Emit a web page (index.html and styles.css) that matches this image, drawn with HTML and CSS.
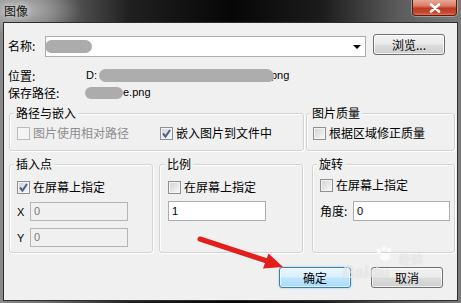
FILE: index.html
```html
<!DOCTYPE html>
<html lang="zh">
<head>
<meta charset="utf-8">
<title>图像</title>
<link rel="stylesheet" href="styles.css">
</head>
<body>
<div class="window">
  <div class="titlebar">
    <span class="title">图像</span>
    <div class="close">
      <svg width="14" height="10" viewBox="0 0 14 10"><path d="M3 1.5 L11 8.5 M11 1.5 L3 8.5" stroke="#fff" stroke-width="2.6" stroke-linecap="round"/></svg>
    </div>
  </div>
  <div class="client">
    <div class="row-name">
      <span class="lbl-name">名称:</span>
      <div class="combo"><span class="blob blob-name"></span><span class="combo-arrow"></span></div>
      <button class="btn btn-browse">浏览...</button>
    </div>
    <div class="info-row first">
      <span class="info-label">位置:</span>
      <span class="info-val">D:<span class="blob smear"></span>png</span>
    </div>
    <div class="info-row">
      <span class="info-label">保存路径:</span>
      <span class="info-val"><span class="blob blob-save"></span>e.png</span>
    </div>

    <div class="groups-1">
      <div class="group g-path">
        <div class="legend">路径与嵌入</div>
        <div class="check-row">
          <label class="check disabled"><span class="cb"></span><span>图片使用相对路径</span></label>
          <label class="check embed"><span class="cb checked"><svg width="11" height="11" viewBox="0 0 11 11"><path d="M2 5.5 L4.5 8.5 L9 2" fill="none" stroke="#4d5f8c" stroke-width="2"/></svg></span><span>嵌入图片到文件中</span></label>
        </div>
      </div>
      <div class="group g-quality">
        <div class="legend">图片质量</div>
        <div class="check-row">
          <label class="check"><span class="cb"></span><span>根据区域修正质量</span></label>
        </div>
      </div>
    </div>

    <div class="groups-2">
      <div class="group g-insert">
        <div class="legend">插入点</div>
        <div class="check-row2">
          <label class="check"><span class="cb checked"><svg width="11" height="11" viewBox="0 0 11 11"><path d="M2 5.5 L4.5 8.5 L9 2" fill="none" stroke="#4d5f8c" stroke-width="2"/></svg></span><span>在屏幕上指定</span></label>
        </div>
        <div class="field-row fx"><span class="axis">X</span><span class="input disabled">0</span></div>
        <div class="field-row fy"><span class="axis">Y</span><span class="input disabled">0</span></div>
      </div>
      <div class="group g-scale">
        <div class="legend">比例</div>
        <div class="check-row2">
          <label class="check"><span class="cb"></span><span>在屏幕上指定</span></label>
        </div>
        <div class="field-row fx"><span class="input wide">1</span></div>
      </div>
      <div class="group g-rotate">
        <div class="legend">旋转</div>
        <div class="check-row2">
          <label class="check"><span class="cb"></span><span>在屏幕上指定</span></label>
        </div>
        <div class="field-row fx"><span class="angle">角度:</span><span class="input">0</span></div>
      </div>
    </div>

    <div class="buttons">
      <button class="btn btn-ok">确定</button>
      <button class="btn btn-cancel">取消</button>
    </div>
  </div>

  <div class="watermark">
    <svg class="paw" width="22" height="16" viewBox="0 0 22 16">
      <circle cx="5" cy="5" r="2.5" fill="rgba(255,255,255,0.7)"/>
      <circle cx="10" cy="2.5" r="2.3" fill="rgba(255,255,255,0.7)"/>
      <circle cx="15" cy="4" r="2.3" fill="rgba(255,255,255,0.7)"/>
      <ellipse cx="11" cy="11" rx="5" ry="4" fill="rgba(255,255,255,0.7)"/>
    </svg>
    <span class="wm-main">Baidu</span>
    <span class="wm-jy">经验</span>
  </div>

  <svg class="arrow" width="461" height="303" viewBox="0 0 461 303">
    <line x1="200" y1="239" x2="267" y2="261" stroke="#e41e1b" stroke-width="5" stroke-linecap="round"/>
    <polygon points="283,267 263,268.5 268.5,253.5" fill="#e41e1b"/>
  </svg>
</div>
</body>
</html>
```

FILE: styles.css
```css
* { box-sizing: border-box; }

body {
  margin: 0;
  background: #000;
  font-family: "Noto Sans CJK SC", "Noto Sans", sans-serif;
  font-size: 12px;
  color: #000;
}

.window {
  position: relative;
  width: 461px;
  height: 303px;
  display: flex;
  flex-direction: column;
  overflow: hidden;
  background:
    radial-gradient(ellipse 60px 26px at 22px 10px, rgba(200,200,200,0.75), rgba(200,200,200,0) 100%),
    linear-gradient(90deg, #8a8a8a 0, #6e6e6e 10%, #202020 28%, #060606 50%, #1c1c1c 70%, #5a5a5a 86%, #7a7a7a 100%);
}

.titlebar {
  height: 22px;
  flex: none;
  display: flex;
  align-items: center;
  padding-left: 4px;
}

.title {
  line-height: 16px;
  font-size: 12px;
  color: #111;
  text-shadow: 0 0 5px #e0e0e0, 0 0 9px #d0d0d0;
}

.close {
  position: absolute;
  left: 412px;
  top: 0;
  width: 45px;
  height: 16px;
  border: 1px solid #5a1a12;
  border-top: none;
  border-radius: 0 0 4px 4px;
  background: linear-gradient(180deg, #e9a796 0%, #d87a66 40%, #c0391f 55%, #c64a2e 85%, #e07a50 100%);
  box-shadow: 0 0 0 1px rgba(255,255,255,0.35);
  display: flex;
  align-items: center;
  justify-content: center;
}

.client {
  flex: 1;
  margin: 0 3px 2px 3px;
  border: 1px solid #2e2e2e;
  background: #f0f0f0;
  padding: 12px 2px 0 4px;
  display: flex;
  flex-direction: column;
}

/* name row */
.row-name {
  height: 22px;
  display: flex;
  align-items: center;
}

.lbl-name {
  width: 37px;
  line-height: 16px;
}

.combo {
  width: 321px;
  height: 21px;
  background: #fff;
  border: 1px solid #abadb3;
  display: flex;
  align-items: center;
  justify-content: space-between;
  padding-right: 4px;
}

.combo-arrow {
  width: 0;
  height: 0;
  border-left: 4px solid transparent;
  border-right: 4px solid transparent;
  border-top: 4px solid #000;
  margin-top: 1px;
}

.blob {
  display: inline-block;
  background: #acacac;
  filter: blur(0.6px);
}

.blob-name {
  width: 47px;
  height: 13px;
  border-radius: 7px;
  margin-left: -1px;
}

.btn {
  font-family: "Noto Sans CJK SC", sans-serif;
  font-size: 12px;
  line-height: 16px;
  color: #000;
  padding: 0;
  border: 1px solid #707070;
  border-radius: 3px;
  background: linear-gradient(180deg, #f2f2f2 0%, #ebebeb 48%, #dddddd 52%, #cfcfcf 100%);
  box-shadow: inset 0 0 0 1px rgba(255,255,255,0.7);
  height: 21px;
  width: 72px;
}

.btn-browse {
  margin-left: 7px;
  margin-top: -3px;
}

/* info rows */
.info-row {
  display: flex;
  line-height: 17px;
  height: 17px;
  align-items: center;
}

.info-row.first { margin-top: 10px; }

.info-label { width: 78px; }

.info-val {
  font-family: "Liberation Sans", Arial, sans-serif;
  font-size: 11px;
  display: flex;
  align-items: center;
}

.smear {
  width: 175px;
  height: 13px;
  margin-left: 2px;
  margin-right: -3px;
  border-radius: 8px 9px 6px 8px;
  background: #adadad;
}

.blob-save {
  width: 38px;
  height: 12px;
  border-radius: 6px;
  margin-left: -1px;
}

/* groups */
.group {
  border: 1px solid #d3d3d3;
  border-radius: 3px;
  box-shadow: 1px 1px 0 #fff, inset 1px 1px 0 #fff;
}

.legend {
  width: fit-content;
  margin: -9px 0 0 -3px;
  padding: 0 2px;
  line-height: 16px;
  background: #f0f0f0;
}

.groups-1 {
  display: flex;
  gap: 2px;
  margin: 12px 0 0 1px;
}

.g-path {
  width: 295px;
  height: 38px;
  padding-left: 7px;
}

.g-quality {
  width: 149px;
  height: 38px;
  padding-left: 6px;
}

.check-row {
  display: flex;
  margin-top: 4px;
  height: 16px;
}

.check {
  display: flex;
  align-items: center;
  gap: 3px;
  line-height: 16px;
}

.check.disabled { color: #8d8d8d; }
.check.embed { margin-left: 31px; }

.cb {
  width: 13px;
  height: 13px;
  flex: none;
  border: 1px solid #8e8f8f;
  background: linear-gradient(135deg, #cfd2d6 0%, #e9e9e9 60%, #fbfbfb 100%);
  box-shadow: inset 0 0 0 1px #f4f4f4;
  display: flex;
  align-items: center;
  justify-content: center;
}

.check.disabled .cb {
  border-color: #bcbcbc;
  background: #f4f4f4;
  box-shadow: none;
}

.cb svg { display: block; }

.groups-2 {
  display: flex;
  margin: 13px 0 0 1px;
}

.g-insert { width: 144px; height: 89px; padding-left: 7px; }
.g-scale { width: 144px; height: 89px; padding-left: 8px; margin-left: 6px; }
.g-rotate { width: 143px; height: 89px; padding-left: 7px; margin-left: 9px; }

.check-row2 {
  margin-top: 7px;
  height: 16px;
  display: flex;
}

.g-rotate .check-row2 { margin-top: 5px; }

.field-row {
  display: flex;
  align-items: center;
}

.field-row.fx { margin-top: 7px; }
.field-row.fy { margin-top: 7px; }
.g-scale .field-row.fx { margin-top: 6px; }
.g-rotate .field-row.fx { margin-top: 8px; }

.axis {
  width: 13px;
  font-family: "Liberation Sans", Arial, sans-serif;
  font-size: 11px;
}

.angle {
  width: 33px;
  line-height: 16px;
}

.input {
  width: 98px;
  height: 19px;
  border: 1px solid #abadb3;
  background: #fff;
  font-family: "Liberation Sans", Arial, sans-serif;
  font-size: 11px;
  line-height: 17px;
  padding-left: 3px;
}

.g-scale .input, .g-rotate .input { height: 20px; line-height: 18px; }
.g-rotate .input { width: 97px; }

.input.disabled {
  background: #f0f0f0;
  border-color: #b5b5b5;
  color: #7a7a7a;
}

/* buttons */
.buttons {
  display: flex;
  justify-content: flex-end;
  gap: 20px;
  margin: 14px 12px 0 0;
}

.btn-ok {
  border-color: #3c7fb1;
  background: linear-gradient(180deg, #eaf6fd 0%, #d9f0fc 48%, #bee6fd 52%, #a7d9f5 100%);
  box-shadow: inset 0 0 0 1px rgba(255,255,255,0.6), 0 0 2px #6fc6e8;
}

/* overlays */
.arrow {
  position: absolute;
  left: 0;
  top: 0;
  pointer-events: none;
}

.watermark {
  position: absolute;
  left: 343px;
  top: 246px;
  width: 100px;
  height: 40px;
  pointer-events: none;
  color: rgba(255,255,255,0.6);
  font-family: "Liberation Sans", Arial, sans-serif;
}

.paw {
  position: absolute;
  left: 31px;
  top: 0;
}

.wm-main {
  position: absolute;
  left: 0;
  top: 18px;
  font-size: 16px;
  font-weight: bold;
  line-height: 18px;
  letter-spacing: 0.5px;
  text-shadow: 0 0 1px rgba(120,120,120,0.35);
}

.wm-jy {
  position: absolute;
  left: 56px;
  top: 7px;
  font-family: "Noto Sans CJK SC", sans-serif;
  font-size: 12px;
  line-height: 12px;
  text-shadow: 0 0 1px rgba(120,120,120,0.35);
}
```
